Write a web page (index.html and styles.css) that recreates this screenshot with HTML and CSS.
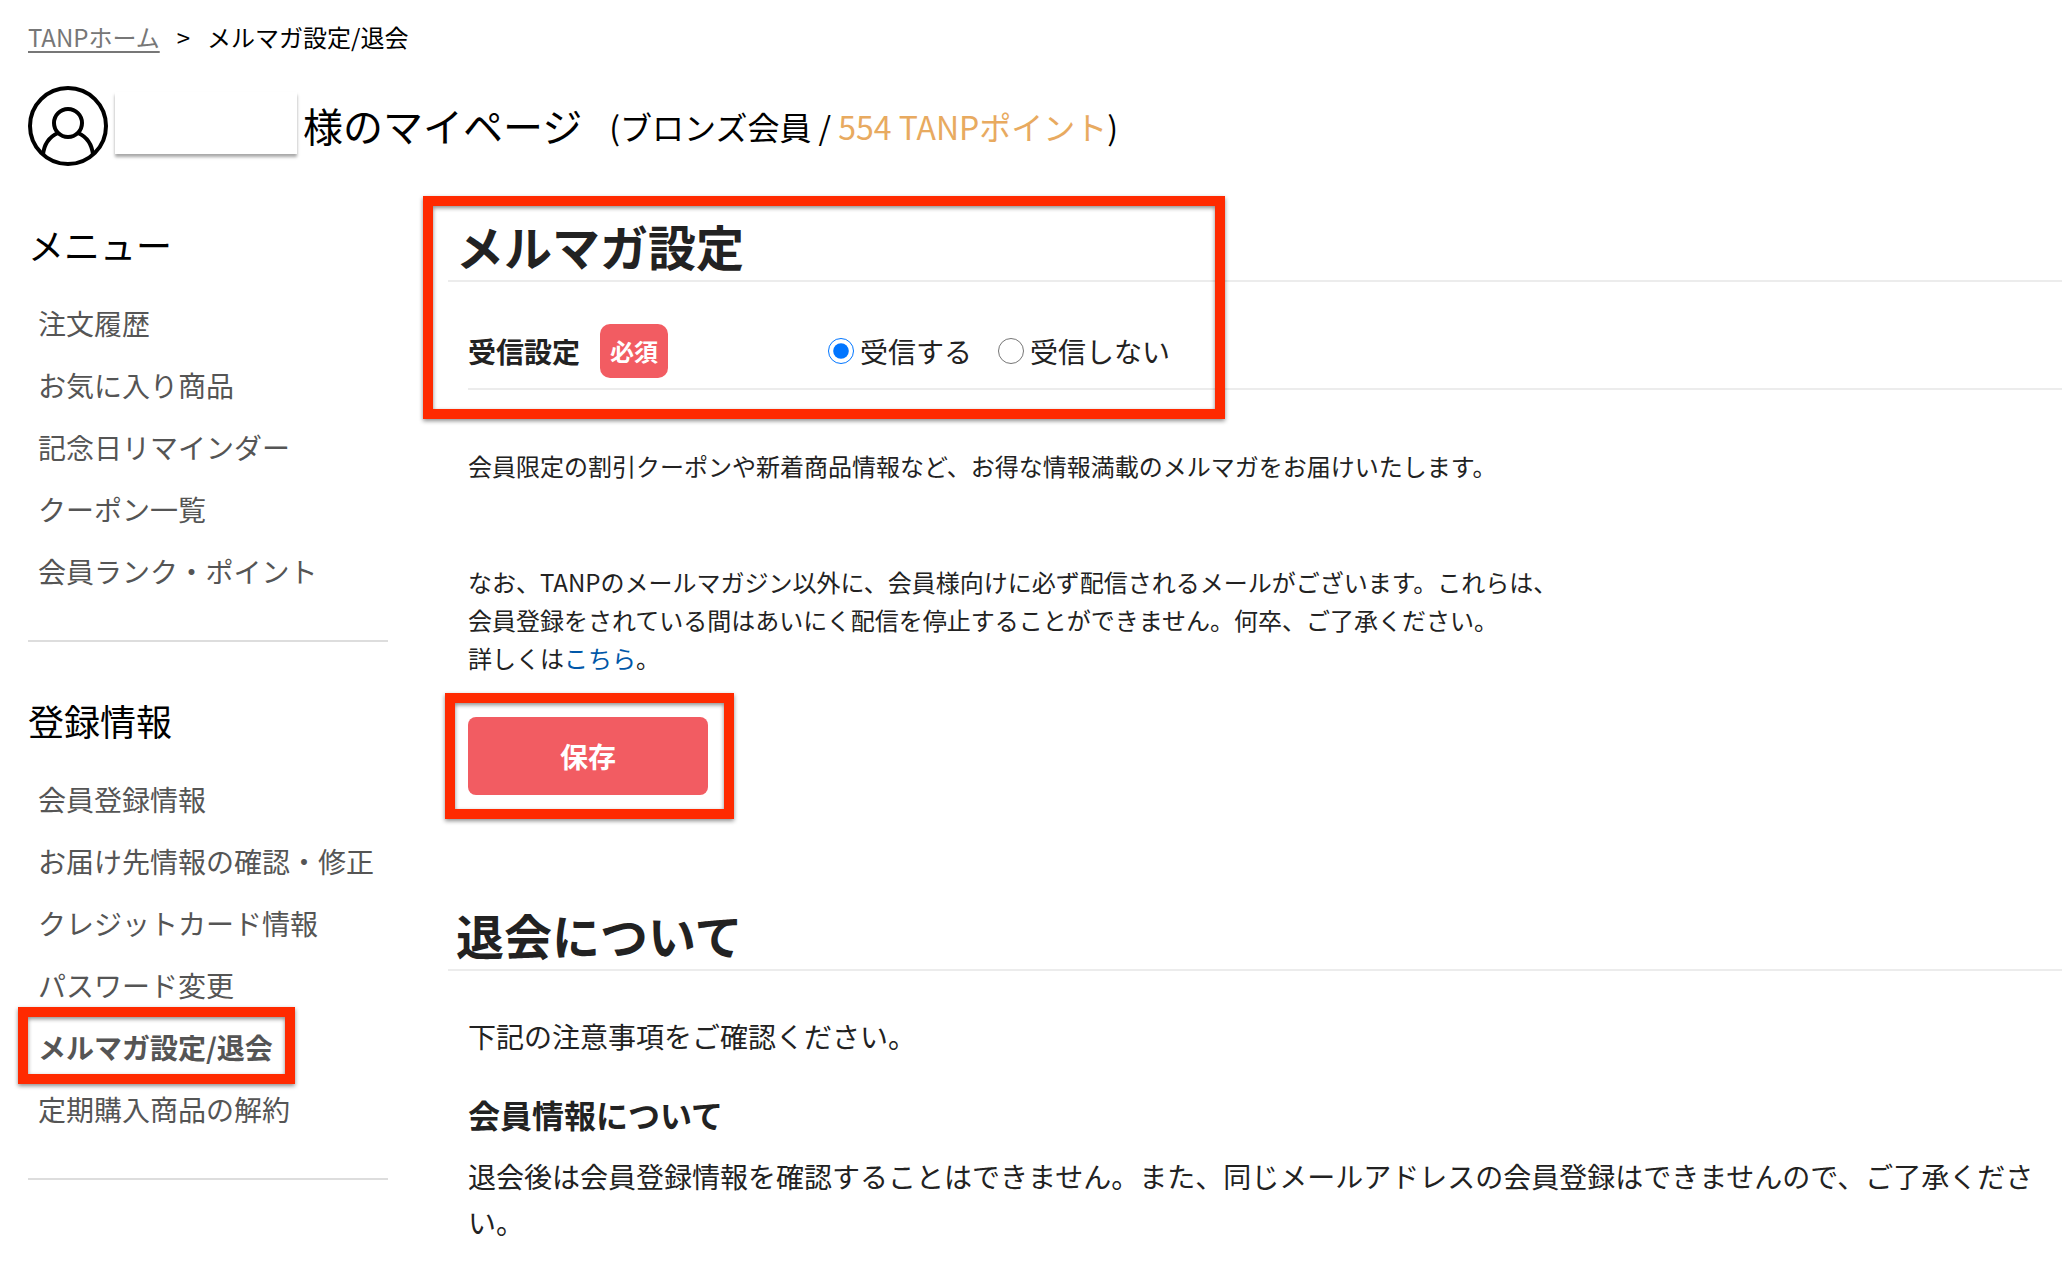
FILE: index.html
```html
<!DOCTYPE html>
<html lang="ja">
<head>
  <meta charset="UTF-8">
  <meta name="viewport" content="width=device-width, initial-scale=1.0">
  <title>メルマガ設定/退会</title>
  <link rel="stylesheet" href="styles.css">
</head>
<body>
  <nav class="breadcrumb">
    <a href="#">TANPホーム</a>
    <span>&gt;</span>
    <span>メルマガ設定/退会</span>
  </nav>

  <header class="user">
    <svg class="user-icon" viewBox="0 0 80 80" fill="none" stroke="#000" stroke-width="4">
      <circle cx="40" cy="40" r="38"/>
      <circle cx="40" cy="37" r="14"/>
      <path d="M15 69C16 58 21 51 30 47M50 47C59 51 64 58 65 69"/>
    </svg>
    <span class="user-name"></span>
    <h1 class="user-title">様のマイページ</h1>
    <p class="user-rank">(ブロンズ会員 / <span class="point">554 TANPポイント</span>)</p>
  </header>

  <div class="layout">
    <nav class="side">
      <section class="side-group">
        <h2 class="side-title">メニュー</h2>
        <ul class="side-list">
          <li><a href="#">注文履歴</a></li>
          <li><a href="#">お気に入り商品</a></li>
          <li><a href="#">記念日リマインダー</a></li>
          <li><a href="#">クーポン一覧</a></li>
          <li><a href="#">会員ランク・ポイント</a></li>
        </ul>
      </section>
      <section class="side-group">
        <h2 class="side-title">登録情報</h2>
        <ul class="side-list">
          <li><a href="#">会員登録情報</a></li>
          <li><a href="#">お届け先情報の確認・修正</a></li>
          <li><a href="#">クレジットカード情報</a></li>
          <li><a href="#">パスワード変更</a></li>
          <li class="current marked mark-menu"><a href="#">メルマガ設定/退会</a></li>
          <li><a href="#">定期購入商品の解約</a></li>
        </ul>
      </section>
    </nav>

    <main class="content">
      <form>
        <div class="marked mark-setting">
          <h2 class="heading">メルマガ設定</h2>
          <div class="row" role="radiogroup" aria-labelledby="receive-label">
            <div class="row-label">
              <span id="receive-label">受信設定</span>
              <span class="badge">必須</span>
            </div>
            <div class="row-options">
              <label><input type="radio" name="receive" checked>受信する</label>
              <label><input type="radio" name="receive">受信しない</label>
            </div>
          </div>
        </div>
        <div class="body">
          <p class="lead">会員限定の割引クーポンや新着商品情報など、お得な情報満載のメルマガをお届けいたします。</p>
          <p class="note">
            なお、TANPのメールマガジン以外に、会員様向けに必ず配信されるメールがございます。これらは、<br>
            会員登録をされている間はあいにく配信を停止することができません。何卒、ご了承ください。<br>
            詳しくは<a href="#">こちら</a>。
          </p>
          <div class="marked mark-save">
            <button class="save" type="submit">保存</button>
          </div>
        </div>
      </form>

      <section class="leave">
        <h2 class="heading">退会について</h2>
        <div class="body">
          <p class="leave-lead">下記の注意事項をご確認ください。</p>
          <h3 class="leave-title">会員情報について</h3>
          <p>退会後は会員登録情報を確認することはできません。また、同じメールアドレスの会員登録はできませんので、ご了承ください。</p>
        </div>
      </section>
    </main>
  </div>
</body>
</html>
```

FILE: styles.css
```css
*, *::after {
  box-sizing: border-box;
}
body, h1, h2, h3, p, ul {
  margin: 0;
  padding: 0;
}
body {
  background: #fff;
  color: #222;
  font-family: 'Noto Sans CJK JP', sans-serif;
  font-size: 28px;
  line-height: 46px;
}
.breadcrumb {
  display: flex;
  gap: 17px;
  padding: 18px 28px 0;
  font-size: 24px;
  line-height: 38px;
  color: #000;
}
.breadcrumb a {
  color: #777;
  text-underline-offset: 4px;
}
.user {
  display: flex;
  align-items: center;
  margin-top: 30px;
  padding: 0 28px;
  color: #000;
}
.user-icon {
  width: 80px;
  height: 80px;
}
.user-name {
  width: 182px;
  height: 62px;
  margin: 0 6px 6px 7px;
  background: #fff;
  box-shadow: 0 3px 3px rgba(0, 0, 0, 0.35);
}
.user-title {
  padding-bottom: 2px;
  font-size: 40px;
  font-weight: 400;
}
.user-rank {
  margin-left: 27px;
  font-size: 32px;
}
.point {
  color: #e8aa60;
}
.layout {
  display: flex;
  gap: 60px;
  margin-top: 48px;
  padding-left: 28px;
}

/* side menu */
.side {
  width: 360px;
  flex-shrink: 0;
  padding-top: 4px;
}
.side-group {
  padding-bottom: 38px;
  margin-bottom: 52px;
  border-bottom: 2px solid #ddd;
}
.side-title {
  margin-bottom: 22px;
  color: #000;
  font-size: 36px;
  font-weight: 400;
  line-height: 52px;
}
.side-list {
  list-style: none;
}
.side-list li {
  padding: 8px 10px;
}
.side-list a {
  color: #555;
  text-decoration: none;
}
.side-list .current {
  font-weight: 700;
}

/* main column */
.content {
  flex: 1;
  min-width: 0;
}
.heading {
  padding: 0 0 4px 8px;
  border-bottom: 2px solid #ececec;
  font-size: 48px;
  font-weight: 700;
  line-height: 62px;
}
.row {
  display: flex;
  align-items: center;
  margin-left: 20px;
  padding: 42px 0 10px;
  border-bottom: 2px solid #ececec;
}
.row-label {
  display: flex;
  align-items: center;
  gap: 20px;
  width: 360px;
  font-weight: 700;
}
.badge {
  padding: 4px 10px;
  border-radius: 10px;
  background: #f25c62;
  color: #fff;
  font-size: 24px;
}
.row-options {
  display: flex;
  gap: 26px;
}
.row-options label {
  display: flex;
  align-items: center;
}
.row-options input {
  width: 26px;
  height: 26px;
  margin: 0 6px 0 0;
  accent-color: #0075ff;
}
.body {
  padding: 0 20px;
}
.lead, .note {
  font-size: 24px;
  line-height: 38px;
}
.lead {
  margin-top: 57px;
}
.note {
  margin: 78px 0 40px;
}
.note a {
  color: #0057a8;
  text-decoration: none;
}
.save {
  display: block;
  width: 240px;
  height: 78px;
  border: none;
  border-radius: 8px;
  background: #f25c62;
  color: #fff;
  font: inherit;
  font-weight: 700;
}
.leave {
  margin-top: 108px;
}
.leave-lead {
  margin-top: 42px;
}
.leave-title {
  margin: 32px 0 16px;
  font-size: 32px;
}

/* red frames over the steps to follow */
.marked {
  position: relative;
}
.marked::after {
  content: '';
  position: absolute;
  border: 10px solid #ff2a00;
  filter: drop-shadow(0 2px 2px rgba(0, 0, 0, 0.45));
  pointer-events: none;
}
.mark-menu::after {
  inset: -9px 93px -6px -10px;
}
.mark-setting::after {
  top: -18px;
  bottom: -29px;
  left: -25px;
  width: 802px;
}
.mark-save {
  width: 240px;
}
.mark-save::after {
  inset: -24px -26px -24px -23px;
}
```
